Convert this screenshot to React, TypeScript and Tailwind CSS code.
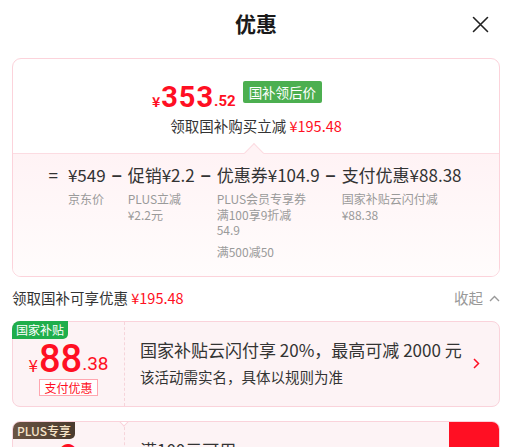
import React from "react";

const font = { fontFamily: '"Noto Sans CJK SC", "Noto Sans", sans-serif' };
const num = { fontFamily: "Roboto, sans-serif" };

function CloseIcon() {
  return (
    <svg width="17" height="17" viewBox="0 0 17 17" fill="none" stroke="#222" strokeWidth="1.6" strokeLinecap="round">
      <path d="M1.5 1.5 L15.5 15.5 M15.5 1.5 L1.5 15.5" />
    </svg>
  );
}

function Col({ head, lines, extra }: { head: string; lines: string[]; extra?: string }) {
  return (
    <div className="flex flex-col">
      <span className="text-[17px] leading-[24px] text-[#333]">{head}</span>
      <div className="mt-[4px] text-[12px] leading-[15.5px] text-[#9a9a9a]">
        {lines.map((l) => (
          <div key={l}>{l}</div>
        ))}
      </div>
      {extra && <div className="mt-[6px] text-[12px] leading-[15.5px] text-[#9a9a9a]">{extra}</div>}
    </div>
  );
}

function Op({ c }: { c: string }) {
  return (
    <span className="text-[18px] leading-[24px] font-bold text-[#333] px-[6px]" style={{ fontFamily: '"Liberation Sans", sans-serif' }}>
      {c}
    </span>
  );
}

export default function App() {
  return (
    <div className="w-[512px] h-[447px] overflow-hidden bg-white" style={font}>
      <div className="relative h-[48px] flex items-center justify-center">
        <span className="text-[21px] font-semibold text-[#1a1a1a]">优惠</span>
        <button className="absolute right-[23px] top-[16px]">
          <CloseIcon />
        </button>
      </div>

      <div className="mx-[12px] mt-[10px] border border-[#fcd3db] rounded-[9px] overflow-hidden">
        <div className="pt-[23px] pb-[17px] flex flex-col items-center">
          <div className="flex items-end h-[30px] ml-[-38px]">
            <span className="text-[#ff0f23] font-bold text-[14px] leading-none mb-[4px] mr-[1px]">¥</span>
            <span className="text-[#ff0f23] font-bold text-[29px] leading-none tracking-[1px]" style={num}>353</span>
            <span className="text-[#ff0f23] font-bold text-[15px] leading-none mb-[3px]" style={num}>.52</span>
            <span className="ml-[7px] mb-[2px] bg-[#4caf50] text-white text-[13.5px] leading-[22px] px-[6px] rounded-[2px] self-start mt-[-1px]">国补领后价</span>
          </div>
          <div className="mt-[4px] text-[14.5px] leading-[20px] text-[#333]">
            领取国补购买立减 <span className="text-[#ff0f23]">¥195.48</span>
          </div>
        </div>
        <div className="relative border-t border-[#fcdce2] bg-gradient-to-b from-[#fff3f5] to-[#fffcfc] pt-[9px] pb-[17px] flex justify-center">
          <span className="absolute left-[234px] top-[-8px] w-[14px] h-[14px] rotate-45 bg-[#fff3f5] border-t border-l border-[#fcdce2]" />
          <div className="flex ml-[-2px]">
            <span className="text-[17px] leading-[24px] text-[#333] pr-[10px]">=</span>
            <Col head="¥549" lines={["京东价"]} />
            <Op c="–" />
            <Col head="促销¥2.2" lines={["PLUS立减", "¥2.2元"]} />
            <Op c="–" />
            <Col head="优惠券¥104.9" lines={["PLUS会员专享券", "满100享9折减", "54.9"]} extra="满500减50" />
            <Op c="–" />
            <Col head="支付优惠¥88.38" lines={["国家补贴云闪付减", "¥88.38"]} />
          </div>
        </div>
      </div>

      <div className="mx-[12px] mt-[11px] mb-[13px] flex items-center justify-between h-[20px]">
        <span className="text-[14.5px] text-[#333]">
          领取国补可享优惠 <span className="text-[#ff0f23]">¥195.48</span>
        </span>
        <span className="flex items-center text-[14.5px] text-[#999]">
          收起
          <svg className="ml-[6px]" width="11" height="7" viewBox="0 0 11 7" fill="none" stroke="#999" strokeWidth="1.4">
            <path d="M1 6 L5.5 1.5 L10 6" />
          </svg>
        </span>
      </div>

      <div className="relative mx-[12px] h-[86px] border border-[#fad3db] bg-[#fdf3f5] rounded-[8px] flex">
        <span className="absolute left-[-1px] top-[-1px] bg-[#1fae4b] text-white text-[12px] leading-[18px] px-[4px] rounded-tl-[8px] rounded-br-[5px]">国家补贴</span>
        <div className="w-[112px] border-r border-dashed border-[#f6d4da] flex flex-col items-center pt-[20px]">
          <div className="flex items-end text-[#ff0f23] h-[34px]">
            <span className="text-[17px] leading-none mb-[3px] mr-[1px]">¥</span>
            <span className="text-[38px] leading-[34px] font-medium" style={num}>88</span>
            <span className="text-[19px] leading-none mb-[3px]" style={num}>.38</span>
          </div>
          <span className="mt-[3px] border border-[#ffa6b0] bg-white text-[#ff0f23] text-[12px] leading-[15px] px-[4px]">支付优惠</span>
        </div>
        <div className="flex-1 pl-[15px] pt-[16px] flex items-start">
          <div className="flex-1">
            <div className="text-[17px] leading-[24px] text-[#333] whitespace-nowrap">国家补贴云闪付享 20%，最高可减 2000 元</div>
            <div className="mt-[5px] text-[14.5px] leading-[20px] text-[#333]">该活动需实名，具体以规则为准</div>
          </div>
          <svg className="mt-[20px] mr-[19px]" width="7" height="11" viewBox="0 0 7 11" fill="none" stroke="#ff0f23" strokeWidth="1.5">
            <path d="M1 1 L5.5 5.5 L1 10" />
          </svg>
        </div>
      </div>

      <div className="relative mx-[12px] mt-[14px] h-[86px] border border-[#fad3db] bg-[#fdf3f5] rounded-[8px] flex overflow-hidden">
        <span className="absolute left-0 top-0 bg-gradient-to-r from-[#6b5443] to-[#4a3a2e] text-[#f6e3c8] text-[12px] leading-[17px] px-[4px] rounded-br-[5px] font-medium">PLUS专享</span>
        <span className="absolute left-[107px] top-[-5px] w-[8px] h-[8px] rotate-45 bg-white border-r border-b border-[#fad3db]" />
        <div className="w-[112px] border-r border-dashed border-[#f6d4da] flex flex-col items-center pt-[20px]">
          <div className="flex items-end text-[#ff0f23] h-[34px]">
            <span className="text-[38px] leading-[34px] font-medium" style={num}>9</span>
          </div>
        </div>
        <div className="flex-1 pl-[15px] pt-[16px]">
          <div className="text-[17px] leading-[24px] text-[#333]">满100元可用</div>
        </div>
        <div className="w-[50px] bg-[#ff0f23]" />
      </div>
    </div>
  );
}
